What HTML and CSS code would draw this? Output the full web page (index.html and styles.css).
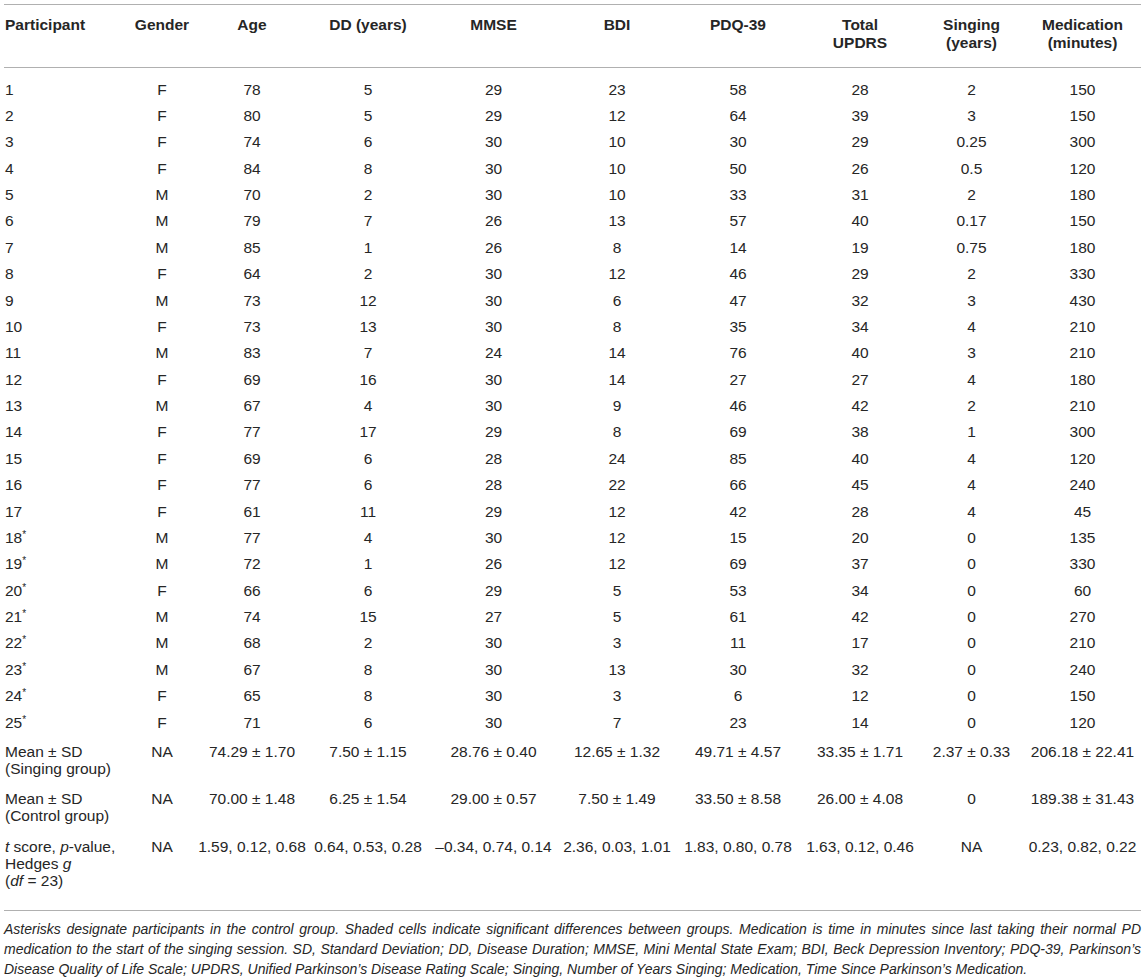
FILE: index.html
```html
<!DOCTYPE html>
<html>
<head>
<meta charset="utf-8">
<link rel="stylesheet" href="styles.css">
</head>
<body>
<div class="wrap">
<table class="data">
<colgroup>
<col class="c-part"><col class="c-gender"><col class="c-age"><col class="c-dd"><col class="c-mmse"><col class="c-bdi"><col class="c-pdq"><col class="c-updrs"><col class="c-sing"><col class="c-med">
</colgroup>
<thead>
<tr>
<th class="left">Participant</th><th>Gender</th><th>Age</th><th>DD (years)</th><th>MMSE</th><th>BDI</th><th>PDQ-39</th><th>Total<br>UPDRS</th><th>Singing<br>(years)</th><th>Medication<br>(minutes)</th>
</tr>
</thead>
<tbody>
<tr class="first"><td class="left">1</td><td>F</td><td>78</td><td>5</td><td>29</td><td>23</td><td>58</td><td>28</td><td>2</td><td>150</td></tr>
<tr><td class="left">2</td><td>F</td><td>80</td><td>5</td><td>29</td><td>12</td><td>64</td><td>39</td><td>3</td><td>150</td></tr>
<tr><td class="left">3</td><td>F</td><td>74</td><td>6</td><td>30</td><td>10</td><td>30</td><td>29</td><td>0.25</td><td>300</td></tr>
<tr><td class="left">4</td><td>F</td><td>84</td><td>8</td><td>30</td><td>10</td><td>50</td><td>26</td><td>0.5</td><td>120</td></tr>
<tr><td class="left">5</td><td>M</td><td>70</td><td>2</td><td>30</td><td>10</td><td>33</td><td>31</td><td>2</td><td>180</td></tr>
<tr><td class="left">6</td><td>M</td><td>79</td><td>7</td><td>26</td><td>13</td><td>57</td><td>40</td><td>0.17</td><td>150</td></tr>
<tr><td class="left">7</td><td>M</td><td>85</td><td>1</td><td>26</td><td>8</td><td>14</td><td>19</td><td>0.75</td><td>180</td></tr>
<tr><td class="left">8</td><td>F</td><td>64</td><td>2</td><td>30</td><td>12</td><td>46</td><td>29</td><td>2</td><td>330</td></tr>
<tr><td class="left">9</td><td>M</td><td>73</td><td>12</td><td>30</td><td>6</td><td>47</td><td>32</td><td>3</td><td>430</td></tr>
<tr><td class="left">10</td><td>F</td><td>73</td><td>13</td><td>30</td><td>8</td><td>35</td><td>34</td><td>4</td><td>210</td></tr>
<tr><td class="left">11</td><td>M</td><td>83</td><td>7</td><td>24</td><td>14</td><td>76</td><td>40</td><td>3</td><td>210</td></tr>
<tr><td class="left">12</td><td>F</td><td>69</td><td>16</td><td>30</td><td>14</td><td>27</td><td>27</td><td>4</td><td>180</td></tr>
<tr><td class="left">13</td><td>M</td><td>67</td><td>4</td><td>30</td><td>9</td><td>46</td><td>42</td><td>2</td><td>210</td></tr>
<tr><td class="left">14</td><td>F</td><td>77</td><td>17</td><td>29</td><td>8</td><td>69</td><td>38</td><td>1</td><td>300</td></tr>
<tr><td class="left">15</td><td>F</td><td>69</td><td>6</td><td>28</td><td>24</td><td>85</td><td>40</td><td>4</td><td>120</td></tr>
<tr><td class="left">16</td><td>F</td><td>77</td><td>6</td><td>28</td><td>22</td><td>66</td><td>45</td><td>4</td><td>240</td></tr>
<tr><td class="left">17</td><td>F</td><td>61</td><td>11</td><td>29</td><td>12</td><td>42</td><td>28</td><td>4</td><td>45</td></tr>
<tr><td class="left">18<sup>*</sup></td><td>M</td><td>77</td><td>4</td><td>30</td><td>12</td><td>15</td><td>20</td><td>0</td><td>135</td></tr>
<tr><td class="left">19<sup>*</sup></td><td>M</td><td>72</td><td>1</td><td>26</td><td>12</td><td>69</td><td>37</td><td>0</td><td>330</td></tr>
<tr><td class="left">20<sup>*</sup></td><td>F</td><td>66</td><td>6</td><td>29</td><td>5</td><td>53</td><td>34</td><td>0</td><td>60</td></tr>
<tr><td class="left">21<sup>*</sup></td><td>M</td><td>74</td><td>15</td><td>27</td><td>5</td><td>61</td><td>42</td><td>0</td><td>270</td></tr>
<tr><td class="left">22<sup>*</sup></td><td>M</td><td>68</td><td>2</td><td>30</td><td>3</td><td>11</td><td>17</td><td>0</td><td>210</td></tr>
<tr><td class="left">23<sup>*</sup></td><td>M</td><td>67</td><td>8</td><td>30</td><td>13</td><td>30</td><td>32</td><td>0</td><td>240</td></tr>
<tr><td class="left">24<sup>*</sup></td><td>F</td><td>65</td><td>8</td><td>30</td><td>3</td><td>6</td><td>12</td><td>0</td><td>150</td></tr>
<tr><td class="left">25<sup>*</sup></td><td>F</td><td>71</td><td>6</td><td>30</td><td>7</td><td>23</td><td>14</td><td>0</td><td>120</td></tr>
<tr class="sum"><td class="left">Mean ± SD<br>(Singing group)</td><td>NA</td><td>74.29 ± 1.70</td><td>7.50 ± 1.15</td><td>28.76 ± 0.40</td><td>12.65 ± 1.32</td><td>49.71 ± 4.57</td><td>33.35 ± 1.71</td><td>2.37 ± 0.33</td><td>206.18 ± 22.41</td></tr>
<tr class="sum"><td class="left">Mean ± SD<br>(Control group)</td><td>NA</td><td>70.00 ± 1.48</td><td>6.25 ± 1.54</td><td>29.00 ± 0.57</td><td>7.50 ± 1.49</td><td>33.50 ± 8.58</td><td>26.00 ± 4.08</td><td>0</td><td>189.38 ± 31.43</td></tr>
<tr class="sum last"><td class="left"><i>t</i> score, <i>p</i>-value,<br>Hedges <i>g</i><br>(<i>df</i> = 23)</td><td>NA</td><td>1.59, 0.12, 0.68</td><td>0.64, 0.53, 0.28</td><td>–0.34, 0.74, 0.14</td><td>2.36, 0.03, 1.01</td><td>1.83, 0.80, 0.78</td><td>1.63, 0.12, 0.46</td><td>NA</td><td>0.23, 0.82, 0.22</td></tr>
</tbody>
</table>
<p class="note">Asterisks designate participants in the control group. Shaded cells indicate significant differences between groups. Medication is time in minutes since last taking their normal PD medication to the start of the singing session. SD, Standard Deviation; DD, Disease Duration; MMSE, Mini Mental State Exam; BDI, Beck Depression Inventory; PDQ-39, Parkinson’s Disease Quality of Life Scale; UPDRS, Unified Parkinson’s Disease Rating Scale; Singing, Number of Years Singing; Medication, Time Since Parkinson’s Medication.</p>
</div>
</body>
</html>
```
FILE: styles.css
```css
html, body {
  margin: 0;
  padding: 0;
  background: #ffffff;
}
body {
  font-family: "Liberation Sans", Arial, sans-serif;
  color: #262626;
}
.wrap {
  width: 1137px;
  padding: 4px 0 0 4px;
}
.data {
  width: 1137px;
  table-layout: fixed;
  border-collapse: collapse;
  font-size: 15.5px;
}
.c-part { width: 124px; }
.c-gender { width: 68px; }
.c-age { width: 112px; }
.c-dd { width: 120px; }
.c-mmse { width: 131px; }
.c-bdi { width: 116px; }
.c-pdq { width: 126px; }
.c-updrs { width: 118px; }
.c-sing { width: 105px; }
.c-med { width: 117px; }
.data thead th {
  font-weight: bold;
  text-align: center;
  vertical-align: top;
  line-height: 18px;
  padding: 11px 0 15px 0;
  border-top: 1px solid #b0b0b0;
  border-bottom: 1px solid #b0b0b0;
}
.data td {
  text-align: center;
  vertical-align: top;
  line-height: 17px;
  padding: 4.7px 0;
  white-space: nowrap;
}
.data .left {
  text-align: left;
  padding-left: 1px;
}
.data tr.first td {
  padding-top: 12.5px;
}
.data tr.sum td {
  padding-top: 7.5px;
  padding-bottom: 6px;
}
.data tr.last td {
  padding-bottom: 21px;
  border-bottom: 1px solid #b0b0b0;
}
.data sup {
  font-size: 10px;
  line-height: 0;
  vertical-align: 5px;
}
.note {
  margin: 8px 0 0 0;
  font-size: 14px;
  font-style: italic;
  line-height: 20px;
  text-align: justify;
}
```
